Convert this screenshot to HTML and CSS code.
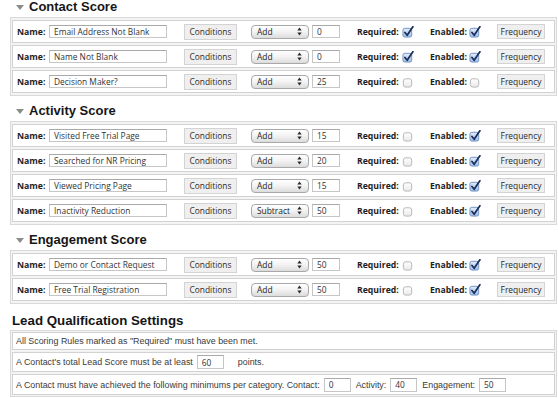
FILE: index.html
```html
<!DOCTYPE html>
<html lang="en">
<head>
    <meta charset="UTF-8">
    <title>Lead Scoring Rules</title>
    <link rel="stylesheet" href="styles.css">
</head>
<body>
    <svg class="defs" width="0" height="0">
        <defs>
            <linearGradient id="boxOn" x1="0" y1="0" x2="0" y2="1">
                <stop offset="0" stop-color="#e4eefb"/>
                <stop offset="1" stop-color="#9dbde6"/>
            </linearGradient>
            <linearGradient id="boxOff" x1="0" y1="0" x2="0" y2="1">
                <stop offset="0" stop-color="#ffffff"/>
                <stop offset="1" stop-color="#e9e9e9"/>
            </linearGradient>
        </defs>
        <symbol id="tickOn" viewBox="0 0 13 13">
            <rect x="1" y="2.5" width="9.5" height="9.5" rx="2" fill="url(#boxOn)" stroke="#6f8fbf"/>
            <path d="M3.2 7 L5.6 10 L11.8 0.8" fill="none" stroke="#1c2f5c" stroke-width="1.9" stroke-linecap="round" stroke-linejoin="round"/>
        </symbol>
        <symbol id="tickOff" viewBox="0 0 13 13">
            <rect x="1.5" y="3" width="9" height="9" rx="2.5" fill="url(#boxOff)" stroke="#b4b4b4"/>
        </symbol>
        <symbol id="arrows" viewBox="0 0 5 9">
            <path d="M0.3 3.6 L2.5 0.6 L4.7 3.6 Z M0.3 5.4 L2.5 8.4 L4.7 5.4 Z" fill="#2b2b2b"/>
        </symbol>
    </svg>

    <div class="page">
        <!-- Contact -->
        <h2 class="group-title"><span class="toggle"></span>Contact Score</h2>
        <div class="rules">
            <div class="rule">
                <span class="lbl lbl-name">Name:</span>
                <input class="field name" type="text" value="Email Address Not Blank">
                <button class="btn cond">Conditions</button>
                <div class="select"><span>Add</span><svg class="arr"><use href="#arrows"/></svg></div>
                <input class="field num" type="text" value="0">
                <span class="lbl lbl-req">Required:</span>
                <svg class="check"><use href="#tickOn"/></svg>
                <span class="lbl lbl-en">Enabled:</span>
                <svg class="check"><use href="#tickOn"/></svg>
                <button class="btn freq">Frequency</button>
            </div>
            <div class="rule">
                <span class="lbl lbl-name">Name:</span>
                <input class="field name" type="text" value="Name Not Blank">
                <button class="btn cond">Conditions</button>
                <div class="select"><span>Add</span><svg class="arr"><use href="#arrows"/></svg></div>
                <input class="field num" type="text" value="0">
                <span class="lbl lbl-req">Required:</span>
                <svg class="check"><use href="#tickOn"/></svg>
                <span class="lbl lbl-en">Enabled:</span>
                <svg class="check"><use href="#tickOn"/></svg>
                <button class="btn freq">Frequency</button>
            </div>
            <div class="rule">
                <span class="lbl lbl-name">Name:</span>
                <input class="field name" type="text" value="Decision Maker?">
                <button class="btn cond">Conditions</button>
                <div class="select"><span>Add</span><svg class="arr"><use href="#arrows"/></svg></div>
                <input class="field num" type="text" value="25">
                <span class="lbl lbl-req">Required:</span>
                <svg class="check"><use href="#tickOff"/></svg>
                <span class="lbl lbl-en">Enabled:</span>
                <svg class="check"><use href="#tickOff"/></svg>
                <button class="btn freq">Frequency</button>
            </div>
        </div>

        <!-- Activity -->
        <h2 class="group-title"><span class="toggle"></span>Activity Score</h2>
        <div class="rules">
            <div class="rule">
                <span class="lbl lbl-name">Name:</span>
                <input class="field name" type="text" value="Visited Free Trial Page">
                <button class="btn cond">Conditions</button>
                <div class="select"><span>Add</span><svg class="arr"><use href="#arrows"/></svg></div>
                <input class="field num" type="text" value="15">
                <span class="lbl lbl-req">Required:</span>
                <svg class="check"><use href="#tickOff"/></svg>
                <span class="lbl lbl-en">Enabled:</span>
                <svg class="check"><use href="#tickOn"/></svg>
                <button class="btn freq">Frequency</button>
            </div>
            <div class="rule">
                <span class="lbl lbl-name">Name:</span>
                <input class="field name" type="text" value="Searched for NR Pricing">
                <button class="btn cond">Conditions</button>
                <div class="select"><span>Add</span><svg class="arr"><use href="#arrows"/></svg></div>
                <input class="field num" type="text" value="20">
                <span class="lbl lbl-req">Required:</span>
                <svg class="check"><use href="#tickOff"/></svg>
                <span class="lbl lbl-en">Enabled:</span>
                <svg class="check"><use href="#tickOn"/></svg>
                <button class="btn freq">Frequency</button>
            </div>
            <div class="rule">
                <span class="lbl lbl-name">Name:</span>
                <input class="field name" type="text" value="Viewed Pricing Page">
                <button class="btn cond">Conditions</button>
                <div class="select"><span>Add</span><svg class="arr"><use href="#arrows"/></svg></div>
                <input class="field num" type="text" value="15">
                <span class="lbl lbl-req">Required:</span>
                <svg class="check"><use href="#tickOff"/></svg>
                <span class="lbl lbl-en">Enabled:</span>
                <svg class="check"><use href="#tickOn"/></svg>
                <button class="btn freq">Frequency</button>
            </div>
            <div class="rule">
                <span class="lbl lbl-name">Name:</span>
                <input class="field name" type="text" value="Inactivity Reduction">
                <button class="btn cond">Conditions</button>
                <div class="select"><span>Subtract</span><svg class="arr"><use href="#arrows"/></svg></div>
                <input class="field num" type="text" value="50">
                <span class="lbl lbl-req">Required:</span>
                <svg class="check"><use href="#tickOff"/></svg>
                <span class="lbl lbl-en">Enabled:</span>
                <svg class="check"><use href="#tickOn"/></svg>
                <button class="btn freq">Frequency</button>
            </div>
        </div>

        <!-- Engagement -->
        <h2 class="group-title"><span class="toggle"></span>Engagement Score</h2>
        <div class="rules">
            <div class="rule">
                <span class="lbl lbl-name">Name:</span>
                <input class="field name" type="text" value="Demo or Contact Request">
                <button class="btn cond">Conditions</button>
                <div class="select"><span>Add</span><svg class="arr"><use href="#arrows"/></svg></div>
                <input class="field num" type="text" value="50">
                <span class="lbl lbl-req">Required:</span>
                <svg class="check"><use href="#tickOff"/></svg>
                <span class="lbl lbl-en">Enabled:</span>
                <svg class="check"><use href="#tickOn"/></svg>
                <button class="btn freq">Frequency</button>
            </div>
            <div class="rule">
                <span class="lbl lbl-name">Name:</span>
                <input class="field name" type="text" value="Free Trial Registration">
                <button class="btn cond">Conditions</button>
                <div class="select"><span>Add</span><svg class="arr"><use href="#arrows"/></svg></div>
                <input class="field num" type="text" value="50">
                <span class="lbl lbl-req">Required:</span>
                <svg class="check"><use href="#tickOff"/></svg>
                <span class="lbl lbl-en">Enabled:</span>
                <svg class="check"><use href="#tickOn"/></svg>
                <button class="btn freq">Frequency</button>
            </div>
        </div>

        <!-- Qualification -->
        <h2 class="group-title lead-title">Lead Qualification Settings</h2>
        <div class="rules lead">
            <div class="lead-row">All Scoring Rules marked as "Required" must have been met.</div>
            <div class="lead-row">
                <span>A Contact's total Lead Score must be at least</span>
                <input class="field small" type="text" value="60">
                <span class="after">points.</span>
            </div>
            <div class="lead-row tall">
                <span>A Contact must have achieved the following minimums per category. Contact:</span>
                <input class="field small" type="text" value="0">
                <span>Activity:</span>
                <input class="field small" type="text" value="40">
                <span>Engagement:</span>
                <input class="field small" type="text" value="50">
            </div>
        </div>
    </div>
</body>
</html>
```

FILE: styles.css
```css
* {
    margin: 0;
    padding: 0;
    box-sizing: border-box;
}

body {
    background: #ffffff;
    color: #222;
    font-family: "Open Sans", "DejaVu Sans", sans-serif;
}

.defs {
    position: absolute;
    width: 0;
    height: 0;
}

.page {
    padding: 0 1px 0 10px;
}

.group-title {
    display: flex;
    align-items: center;
    font-family: "Liberation Sans", Arial, sans-serif;
    font-size: 13px;
    line-height: 14px;
    font-weight: bold;
    color: #161616;
    margin: 8px 0 3px;
}

.group-title:first-child {
    margin-top: 0;
}

.toggle {
    width: 0;
    height: 0;
    margin: 1px 5px 0 6px;
    border-left: 4px solid transparent;
    border-right: 4px solid transparent;
    border-top: 5px solid #8c8c8c;
}

.rules {
    border: 1px solid #d9d9d9;
    background: #f4f4f4;
    padding: 2px 1px;
    display: flex;
    flex-direction: column;
    gap: 2px;
}

.rule {
    display: flex;
    align-items: center;
    height: 23px;
    border: 1px solid #d2d2d2;
    background: #fff;
    padding-left: 4px;
}

.lbl {
    font-weight: bold;
    font-size: 8.7px;
    color: #1e1e1e;
    white-space: nowrap;
}

.lbl-name { width: 28px; }
.lbl-req { width: 45px; margin-left: 17px; }
.lbl-en { width: 39px; margin-left: 16px; }

.field {
    height: 13px;
    border: 1px solid #c6c6c6;
    border-top-color: #a9a9a9;
    background: #fff;
    font-family: "Open Sans", "DejaVu Sans", sans-serif;
    font-size: 8.4px;
    color: #333;
    padding: 0 0 0 4px;
    outline: none;
}

.name {
    width: 118px;
    margin-left: 4px;
}

.num {
    width: 28px;
    margin-left: 3px;
}

.btn {
    height: 16px;
    border: 1px solid #d3d3d3;
    background: #efefef;
    font-family: "Open Sans", "DejaVu Sans", sans-serif;
    font-size: 8.4px;
    color: #2a2a2a;
}

.cond {
    width: 53px;
    margin-left: 17px;
}

.freq {
    width: 48px;
    height: 15px;
    margin-left: 16px;
}

.select {
    display: flex;
    align-items: center;
    justify-content: space-between;
    width: 58px;
    height: 14px;
    margin-left: 14px;
    padding: 0 6px 0 5px;
    border: 1px solid #a8a8a8;
    border-radius: 4px;
    background: linear-gradient(#ffffff, #f2f2f2 50%, #dcdcdc);
    font-size: 8.4px;
    color: #222;
}

.arr {
    width: 5px;
    height: 9px;
}

.check {
    width: 12px;
    height: 12px;
}

.lead-title {
    margin: 10px 0 2px 2px;
    font-size: 13.3px;
}

.rules.lead {
    padding: 1px;
}

.lead-row {
    display: flex;
    align-items: center;
    min-height: 18px;
    border: 1px solid #d2d2d2;
    background: #fff;
    padding: 2px 3px;
    font-family: "Liberation Sans", Arial, sans-serif;
    font-size: 8.9px;
    color: #3a3a3a;
    white-space: nowrap;
}

.lead-row.tall {
    min-height: 21px;
}

.small {
    width: 27px;
    height: 14px;
    margin: 0 5px 0 4px;
}

.after {
    margin-left: 9px;
}
```
